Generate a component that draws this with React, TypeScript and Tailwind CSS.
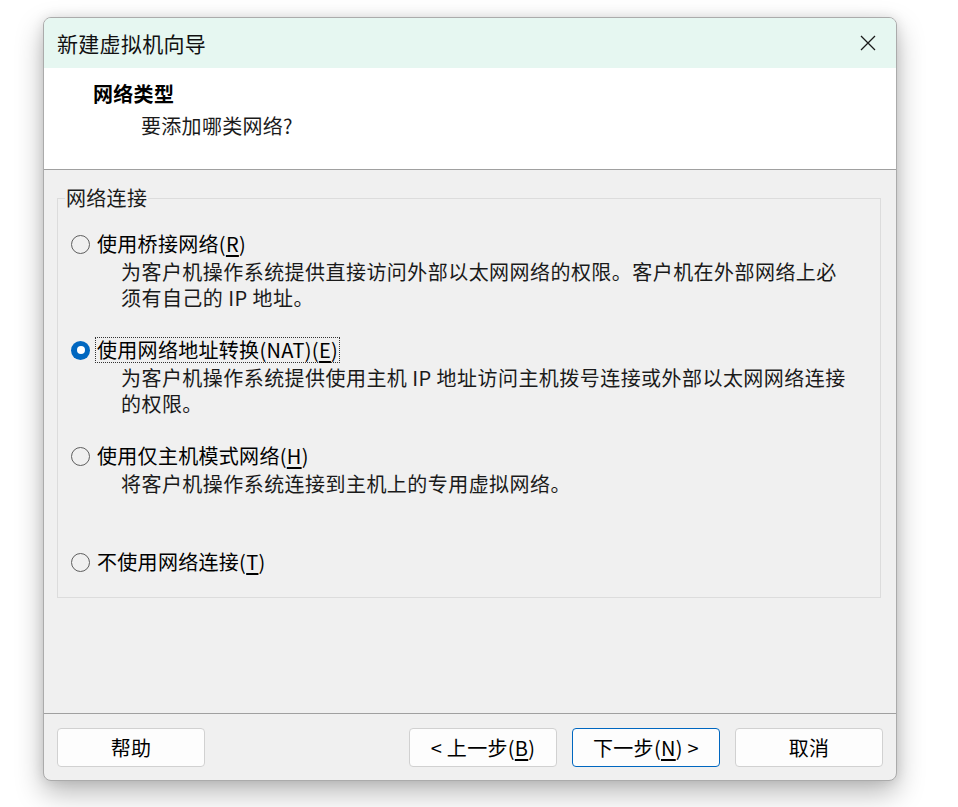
import React from "react";

// Network type options shown in the wizard step
type NetOption = {
  prefix: string;
  hotkey: string;
  lines: string[];
  checked?: boolean;
  extraGap?: boolean;
};

const OPTIONS: NetOption[] = [
  {
    prefix: "使用桥接网络(",
    hotkey: "R",
    lines: [
      "为客户机操作系统提供直接访问外部以太网网络的权限。客户机在外部网络上必",
      "须有自己的 IP 地址。",
    ],
  },
  {
    prefix: "使用网络地址转换(NAT)(",
    hotkey: "E",
    checked: true,
    lines: [
      "为客户机操作系统提供使用主机 IP 地址访问主机拨号连接或外部以太网网络连接",
      "的权限。",
    ],
  },
  {
    prefix: "使用仅主机模式网络(",
    hotkey: "H",
    lines: ["将客户机操作系统连接到主机上的专用虚拟网络。"],
  },
  {
    prefix: "不使用网络连接(",
    hotkey: "T",
    lines: [],
    extraGap: true,
  },
];

const Radio = ({ checked }: { checked?: boolean }) =>
  checked ? (
    <span className="flex h-[19px] w-[19px] shrink-0 items-center justify-center rounded-full bg-[#0067c0]">
      <span className="h-[8px] w-[8px] rounded-full bg-white" />
    </span>
  ) : (
    <span className="h-[19px] w-[19px] shrink-0 rounded-full border border-[#5f5f5f]" />
  );

const OptionRow = ({ opt }: { opt: NetOption }) => (
  <div className={opt.extraGap ? "mt-[51px]" : ""}>
    <div className="flex h-[28px] items-center">
      <Radio checked={opt.checked} />
      <span
        className={
          opt.checked
            ? "ml-[5px] border border-dotted border-[#333] px-[1px] leading-[24px] text-black"
            : "ml-[5px] border border-transparent px-[1px] leading-[24px] text-black"
        }
      >
        {opt.prefix}
        <span className="underline underline-offset-[3px]">{opt.hotkey}</span>)
      </span>
    </div>
    {opt.lines.length > 0 && (
      <div className="mt-[1px] pl-[50px] leading-[26px] tracking-[0.45px] text-[#1a1a1a]">
        {opt.lines.map((l) => (
          <div key={l}>{l}</div>
        ))}
      </div>
    )}
  </div>
);

const Button = ({
  children,
  primary,
}: {
  children: React.ReactNode;
  primary?: boolean;
}) => (
  <button
    className={
      primary
        ? "flex h-[39px] w-[148px] items-center justify-center rounded-[4px] border border-[#0067c0] bg-[#fdfdfd] text-[20px] text-black"
        : "flex h-[39px] w-[148px] items-center justify-center rounded-[4px] border border-[#d1d1d1] bg-[#fdfdfd] text-[20px] text-black"
    }
  >
    {children}
  </button>
);

const App = () => (
  <div className="h-[807px] w-[958px] overflow-hidden bg-white pl-[43px] pt-[17px] font-['Noto_Sans_CJK_SC','Liberation_Sans',sans-serif] text-[20px] tracking-[0.3px]">
    <div className="flex h-[764px] w-[854px] flex-col overflow-hidden rounded-[8px] border border-[#ababab] bg-[#f0f0f0] shadow-[0_12px_28px_rgba(0,0,0,0.28),0_0_12px_rgba(0,0,0,0.1)]">
      {/* title bar */}
      <div className="flex h-[50px] items-center justify-between bg-[#e6f7f1] pl-[13px] pr-[20px]">
        <span className="text-[21px] leading-[28px] text-[#111]">新建虚拟机向导</span>
        <svg width="16" height="16" viewBox="0 0 16 16" className="text-[#1a1a1a]">
          <path d="M1 1L15 15M15 1L1 15" stroke="currentColor" strokeWidth="1.3" />
        </svg>
      </div>

      {/* header */}
      <div className="h-[102px] border-b border-[#a0a0a0] bg-white pl-[49px] pt-[12px]">
        <div className="font-bold leading-[28px] text-black">网络类型</div>
        <div className="mt-[4px] pl-[48px] leading-[28px] text-[#1a1a1a]">要添加哪类网络?</div>
      </div>

      {/* body */}
      <div className="flex-1 px-[13px] pt-[18px]">
        <fieldset className="w-[824px] border border-[#dcdcdc] pb-[21px] pt-[22px]">
          <legend className="ml-[7px] px-[1px] leading-[20px] text-[#1a1a1a]">网络连接</legend>
          <div className="pl-[13px]">
            <div className="flex flex-col gap-[25px]">
              {OPTIONS.slice(0, 3).map((o) => (
                <OptionRow key={o.hotkey} opt={o} />
              ))}
            </div>
            <OptionRow opt={OPTIONS[3]} />
          </div>
        </fieldset>
      </div>

      {/* footer */}
      <div className="flex h-[67px] items-start justify-between border-t border-[#a0a0a0] px-[13px] pt-[14px]">
        <Button>帮助</Button>
        <div className="flex gap-[15px]">
          <Button>
            &lt; 上一步(<span className="underline underline-offset-[3px]">B</span>)
          </Button>
          <Button primary>
            下一步(<span className="underline underline-offset-[3px]">N</span>) &gt;
          </Button>
          <Button>取消</Button>
        </div>
      </div>
    </div>
  </div>
);

export default App;
